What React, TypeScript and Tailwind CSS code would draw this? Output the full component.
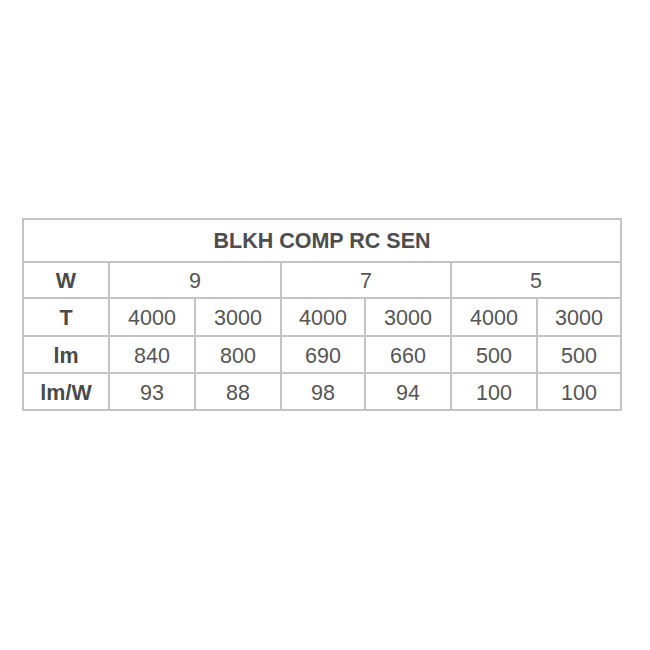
import React from "react";

const cell = "border-2 border-[#c4c4c4] text-center align-middle px-0 pb-0 pt-[4px]";
const num = `${cell} text-[#555555] font-normal`;
const lab = `${cell} text-[#4a4a4a] font-bold`;

export default function App() {
  const rows: { label: string; vals: string[] }[] = [
    { label: "T", vals: ["4000", "3000", "4000", "3000", "4000", "3000"] },
    { label: "lm", vals: ["840", "800", "690", "660", "500", "500"] },
    { label: "lm/W", vals: ["93", "88", "98", "94", "100", "100"] },
  ];
  const heights = ["h-[38px]", "h-[37px]", "h-[37px]"];
  return (
    <div
      className="w-[650px] h-[650px] bg-white pt-[218px] pl-[22px]"
      style={{ fontFamily: '"Liberation Sans", Arial, sans-serif' }}
    >
      <table className="table-fixed border-collapse w-[598px] text-[21.5px] leading-none">
        <colgroup>
          <col className="w-[86px]" />
          <col className="w-[86px]" />
          <col className="w-[86px]" />
          <col className="w-[84px]" />
          <col className="w-[86px]" />
          <col className="w-[86px]" />
          <col className="w-[84px]" />
        </colgroup>
        <tbody>
          <tr className="h-[43px]">
            <td
              colSpan={7}
              className="border-2 border-[#c4c4c4] text-center align-middle px-0 pb-0 pt-[2px] font-bold text-[#4d4d4d]"
            >
              BLKH COMP RC SEN
            </td>
          </tr>
          <tr className="h-[36px]">
            <td className={lab}>W</td>
            <td colSpan={2} className={num}>9</td>
            <td colSpan={2} className={num}>7</td>
            <td colSpan={2} className={num}>5</td>
          </tr>
          {rows.map((r, i) => (
            <tr key={r.label} className={heights[i]}>
              <td className={lab}>{r.label}</td>
              {r.vals.map((v, j) => (
                <td key={j} className={num}>
                  {v}
                </td>
              ))}
            </tr>
          ))}
        </tbody>
      </table>
    </div>
  );
}
